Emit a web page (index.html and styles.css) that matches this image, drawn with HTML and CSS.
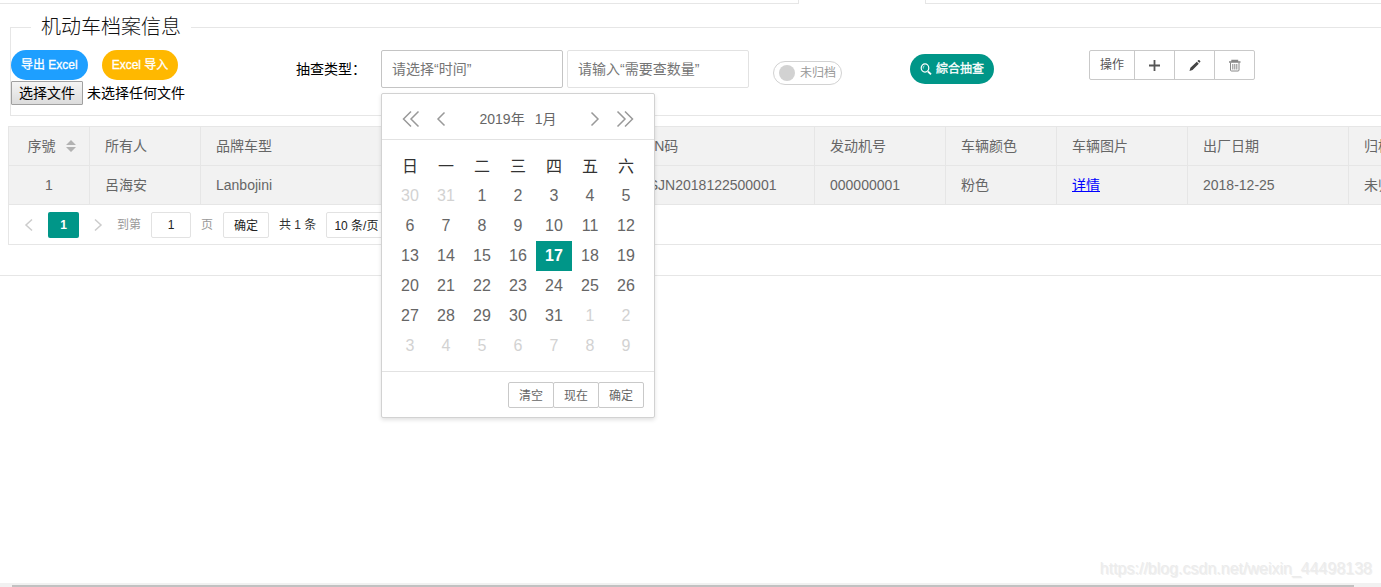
FILE: index.html
```html
<!DOCTYPE html>
<html lang="zh-CN">
<head>
<meta charset="utf-8">
<title>机动车档案信息</title>
<link rel="stylesheet" href="styles.css">
</head>
<body>
<div class="tabs"><span class="tab-left"></span><span class="tab-active"></span><span class="tab-right"></span></div>
<main class="panel">
  <fieldset class="archive">
    <legend>机动车档案信息</legend>
    <div class="toolbar">
      <div class="transfer">
        <div class="transfer-buttons">
          <button class="pill blue" type="button">导出 Excel</button>
          <button class="pill orange" type="button">Excel 导入</button>
        </div>
        <label class="file"><input class="file-input" type="file"><span class="file-button">选择文件</span><span>未选择任何文件</span></label>
      </div>
      <label class="field-label" for="date">抽查类型：</label>
      <div class="date-field">
        <input class="text-input focused" id="date" type="text" placeholder="请选择“时间”">
        <div class="calendar">
          <div class="calendar-head">
            <button class="arrow" type="button" aria-label="上一年"><svg width="18" height="18" viewBox="0 0 18 18"><path d="M9 1.5 1.5 9 9 16.5M16.5 1.5 9 9l7.5 7.5"/></svg></button>
            <button class="arrow" type="button" aria-label="上一月"><svg width="10" height="18" viewBox="0 0 10 18"><path d="M8.500 2.500 2 9l6.500 6.500"/></svg></button>
            <div class="calendar-title"><span>2019年</span><span>1月</span></div>
            <button class="arrow" type="button" aria-label="下一月"><svg width="10" height="18" viewBox="0 0 10 18"><path d="M1.500 2.500 8 9l-6.500 6.500"/></svg></button>
            <button class="arrow" type="button" aria-label="下一年"><svg width="18" height="18" viewBox="0 0 18 18"><path d="M1.500 1.500 9 9l-7.500 7.500M9 1.500 16.500 9 9 16.500"/></svg></button>
          </div>
          <div class="calendar-body">
            <table class="days">
              <thead><tr><th>日</th><th>一</th><th>二</th><th>三</th><th>四</th><th>五</th><th>六</th></tr></thead>
              <tbody>
                <tr><td class="dim">30</td><td class="dim">31</td><td>1</td><td>2</td><td>3</td><td>4</td><td>5</td></tr>
                <tr><td>6</td><td>7</td><td>8</td><td>9</td><td>10</td><td>11</td><td>12</td></tr>
                <tr><td>13</td><td>14</td><td>15</td><td>16</td><td class="today">17</td><td>18</td><td>19</td></tr>
                <tr><td>20</td><td>21</td><td>22</td><td>23</td><td>24</td><td>25</td><td>26</td></tr>
                <tr><td>27</td><td>28</td><td>29</td><td>30</td><td>31</td><td class="dim">1</td><td class="dim">2</td></tr>
                <tr><td class="dim">3</td><td class="dim">4</td><td class="dim">5</td><td class="dim">6</td><td class="dim">7</td><td class="dim">8</td><td class="dim">9</td></tr>
              </tbody>
            </table>
          </div>
          <div class="calendar-foot"><button type="button">清空</button><button type="button">现在</button><button type="button">确定</button></div>
        </div>
      </div>
      <input class="text-input" type="text" placeholder="请输入“需要查数量”" aria-label="需要查数量">
      <button class="switch" type="button" role="switch" aria-checked="false"><i></i><span>未归档</span></button>
      <button class="pill green" type="button"><svg width="12" height="12" viewBox="0 0 12 12"><ellipse cx="5" cy="5" rx="3.800" ry="4.200"/><path d="M8 8.500l3 2.800" stroke-width="1.800"/><path d="M3.300 5.500V4.200q.2-1 1.200-1.300" stroke-width=".7"/></svg><span>綜合抽查</span></button>
      <div class="actions">
        <button class="action-text" type="button">操作</button>
        <button type="button" aria-label="添加"><svg width="14" height="14" viewBox="0 0 14 14"><path d="M6.500 2v11M1 7.500h11" stroke="#555" stroke-width="1.800"/></svg></button>
        <button type="button" aria-label="编辑"><svg width="14" height="14" viewBox="0 0 14 14"><path d="M1.500 13l.9-3.200L8.800 3.700l2 2L4.500 12zM9.400 3.100l1.100-1q.5-.4 1 .1l.7.7q.5.500 0 1l-.9.900z" fill="#444"/></svg></button>
        <button type="button" aria-label="删除"><svg width="14" height="14" viewBox="0 0 14 14" fill="none" stroke="#888"><path d="M1 4h11.500M4 3.500V2.500h5.500v1" stroke-width="1.400"/><path d="M2.500 4.500V12q0 1 1 1h6.500q1 0 1-1V4.500M4.800 6v5.500M6.800 6v5.500M8.800 6v5.500"/></svg></button>
      </div>
    </div>
  </fieldset>

  <div class="grid">
    <table class="records">
      <colgroup><col class="c-index"><col class="c-mid"><col class="c-brand"><col class="c-vin"><col class="c-wide"><col class="c-mid"><col class="c-wide"><col class="c-date"><col></colgroup>
      <thead><tr><th class="center"><span class="sortable">序號<svg width="10" height="12" viewBox="0 0 10 12" fill="#b2b2b2"><path d="M5 0l5 5H0zM0 7h10l-5 5z"/></svg></span></th><th>所有人</th><th>品牌车型</th><th>VIN码</th><th>发动机号</th><th>车辆颜色</th><th>车辆图片</th><th>出厂日期</th><th>归档</th></tr></thead>
      <tbody><tr><td class="center">1</td><td>呂海安</td><td>Lanbojini</td><td>LSJN2018122500001</td><td>000000001</td><td>粉色</td><td><a href="#">详情</a></td><td>2018-12-25</td><td>未归</td></tr></tbody>
    </table>
    <div class="pager">
      <button class="page-arrow" type="button" aria-label="上一页"><svg width="10" height="14" viewBox="0 0 10 14"><path d="M8 1.500 2 7l6 5.500"/></svg></button>
      <button class="page-current" type="button">1</button>
      <button class="page-arrow" type="button" aria-label="下一页"><svg width="10" height="14" viewBox="0 0 10 14"><path d="M2 1.500 8 7l-6 5.500"/></svg></button>
      <label class="muted" for="page">到第</label>
      <input class="page-input" id="page" type="text" value="1">
      <span class="muted">页</span>
      <button class="page-go" type="button">确定</button>
      <span>共 1 条</span>
      <select class="page-size" aria-label="每页条数"><option>10 条/页</option></select>
    </div>
  </div>
</main>
<div class="watermark">https://blog.csdn.net/weixin_44498138</div>
<div class="scrollbar"><div class="thumb"></div></div>
</body>
</html>
```
FILE: styles.css
```css
* { box-sizing: border-box; }
body {
  margin: 0;
  min-height: 100vh;
  display: flex;
  flex-direction: column;
  overflow: hidden;
  position: relative;
  background: #fff;
  color: #000;
  font: 14px/24px "Liberation Sans", "Noto Sans CJK SC", sans-serif;
}
button, input, select { font: inherit; margin: 0; }
button { padding: 0; cursor: pointer; }

.tabs { display: flex; height: 4px; }
.tab-left { width: 799px; border-right: 1px solid #e6e6e6; border-bottom: 1px solid #e6e6e6; }
.tab-active { width: 126px; }
.tab-right { flex: 1; border-left: 1px solid #e6e6e6; border-bottom: 1px solid #e6e6e6; }

.panel { padding: 9px 0 30px 8px; border-bottom: 1px solid #e6e6e6; }

.archive {
  margin: 0 0 10px 2px;
  padding: 9px 0 10px;
  min-width: 0;
  border: 1px solid #e6e6e6;
  border-right: 0;
}
.archive legend { margin-left: 20px; padding: 0 10px; font-size: 20px; line-height: 28px; font-weight: 300; color: #111; }

.toolbar { display: flex; align-items: flex-start; }
.transfer { width: 285px; }
.transfer-buttons { display: flex; gap: 14px; }
.pill { height: 30px; padding: 0 10px; border: 0; border-radius: 15px; color: #fff; font-size: 12px; line-height: 30px; -webkit-text-stroke: 0.3px #fff; }
.blue { background: #1e9fff; }
.orange { background: #ffb800; }
.green { display: flex; align-items: center; gap: 4px; margin: 4px 95px 0 68px; background: #009688; }
.green svg { fill: none; stroke: #fff; stroke-width: 1.2; }

.file { display: flex; align-items: center; gap: 4px; position: relative; height: 25px; }
.file-input { position: absolute; width: 72px; height: 24px; opacity: 0; }
.file-button { padding: 0 7px; border: 1px solid #a0a0a0; border-radius: 1px; background: linear-gradient(#f4f4f4, #dcdcdc); line-height: 22px; }

.field-label { width: 85px; line-height: 38px; }
.date-field { position: relative; margin-right: 4px; }
.text-input { display: block; width: 182px; height: 38px; padding: 0 10px; border: 1px solid #e2e2e2; border-radius: 2px; background: #fff; outline: 0; }
.text-input::placeholder { color: #757575; }
.focused { border-color: #c4c4c4; }

.switch { display: flex; align-items: center; gap: 5px; height: 24px; margin: 11px 0 0 24px; padding: 0 5px; border: 1px solid #d2d2d2; border-radius: 12px; background: #fff; color: #999; font-size: 12px; line-height: 22px; }
.switch i { width: 16px; height: 16px; border-radius: 50%; background: #d2d2d2; }

.actions { display: flex; }
.actions button { display: flex; align-items: center; justify-content: center; width: 41px; height: 30px; margin-left: -1px; border: 1px solid #c9c9c9; background: #fff; color: #555; font-size: 12px; }
.actions .action-text { width: 46px; margin-left: 0; border-radius: 2px 0 0 2px; }
.actions button:last-child { border-radius: 0 2px 2px 0; }

.calendar { position: absolute; z-index: 5; top: 43px; left: 0; width: 274px; border: 1px solid #d2d2d2; border-radius: 2px; background: #fff; box-shadow: 0 2px 4px rgba(0, 0, 0, .12); color: #666; }
.calendar-head { display: flex; align-items: center; height: 46px; padding: 5px 20px 0; border-bottom: 1px solid #e2e2e2; }
.arrow { display: flex; border: 0; background: none; }
.arrow svg { fill: none; stroke: #999; stroke-width: 1.5; }
.arrow:first-child { margin-right: 16px; }
.arrow:last-child { margin-left: 16px; }
.calendar-title { flex: 1; display: flex; justify-content: center; gap: 10px; }
.calendar-body { padding: 10px; }
.days { width: 100%; border-collapse: collapse; table-layout: fixed; font-size: 16px; text-align: center; }
.days th { height: 31px; padding: 2px 0 0; color: #333; font-weight: 400; }
.days td { height: 30px; padding: 0; }
.days .dim { color: #d2d2d2; }
.days .today { background: #009688; color: #fff; font-weight: 700; }
.calendar-foot { display: flex; justify-content: flex-end; height: 46px; padding: 10px; border-top: 1px solid #e2e2e2; }
.calendar-foot button { width: 46px; height: 26px; padding-top: 1px; border: 1px solid #c9c9c9; border-radius: 2px; background: #fff; color: #666; font-size: 12px; line-height: 24px; }
.calendar-foot button + button { margin-left: -1px; }

.grid { overflow: hidden; border: 1px solid #e6e6e6; border-right: 0; }
.records { width: 100%; border-collapse: separate; border-spacing: 0; table-layout: fixed; background: #f2f2f2; color: #666; }
.c-index { width: 81px; }
.c-mid { width: 111px; }
.c-wide { width: 131px; }
.c-brand { width: 425px; }
.c-vin { width: 189px; }
.c-date { width: 161px; }
.records th, .records td { height: 39px; padding: 0 0 0 15px; border-right: 1px solid #e6e6e6; border-bottom: 1px solid #e6e6e6; font-weight: 400; text-align: left; white-space: nowrap; }
.records th:last-child, .records td:last-child { border-right: 0; overflow: hidden; }
.records .center { padding: 0; text-align: center; }
.sortable { display: flex; align-items: center; justify-content: center; gap: 10px; padding-left: 5px; }
.records a { color: #00f; text-decoration: underline; }

.pager { display: flex; align-items: center; gap: 10px; height: 39px; padding-left: 15px; color: #333; font-size: 12px; white-space: nowrap; }
.page-arrow { display: flex; border: 0; background: none; }
.page-arrow svg { fill: none; stroke: #ccc; stroke-width: 1.5; }
.page-current { width: 31px; height: 26px; margin: 0 4px; border: 0; border-radius: 2px; background: #009688; color: #fff; font-weight: 700; }
.page-arrow + .muted { margin-left: 4px; }
.muted { color: #999; }
.page-input, .page-go, .page-size { height: 26px; border: 1px solid #e2e2e2; border-radius: 2px; background: #fff; color: #222; }
.page-input { width: 40px; text-align: center; }
.page-go { width: 46px; padding-top: 1px; }
.page-size { width: 80px; padding: 1px 7px 0; appearance: none; }

.watermark { margin: auto 9px 2px auto; color: #ececec; font-size: 16px; text-shadow: 1px 1px 0 #f0f0f0; }
.scrollbar { height: 4px; padding: 2px 27px 0 12px; background: #f1f1f1; }
.thumb { height: 2px; background: #c1c1c1; }
```
